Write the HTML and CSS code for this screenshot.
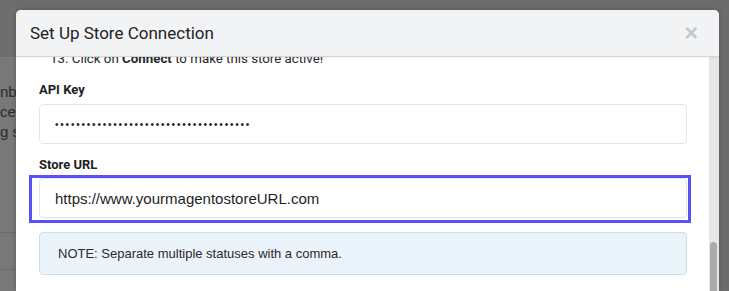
FILE: index.html
```html
<!DOCTYPE html>
<html lang="en">
<head>
  <meta charset="UTF-8" />
  <title>Set Up Store Connection</title>
  <link rel="stylesheet" href="styles.css">
</head>
<body>
  <div class="page-edge">
    <div class="page-head"></div>
    <div class="page-text">
      <p>nb</p>
      <p>ce</p>
      <p>g s</p>
    </div>
    <div class="page-row"></div>
    <div class="page-row"></div>
  </div>

  <div class="modal">
    <div class="modal-header">
      <h1>Set Up Store Connection</h1>
      <span class="close">&times;</span>
    </div>

    <div class="modal-body">
      <div class="content">
        <p class="step">13. Click on <strong>Connect</strong> to make this store active!</p>

        <label>API Key</label>
        <div class="field"><span class="dots">•••••••••••••••••••••••••••••••••••••</span></div>

        <label>Store URL</label>
        <div class="highlight">
          <div class="field url">https://www.yourmagentostoreURL.com</div>
        </div>

        <div class="note">NOTE: Separate multiple statuses with a comma.</div>
      </div>
      <div class="scrollbar"><div class="thumb"></div></div>
    </div>
  </div>
</body>
</html>
```

FILE: styles.css
```css
body {
  margin: 0;
  height: 291px;
  overflow: hidden;
  background: #6c6c6c;
  font-family: 'Liberation Sans', Arial, sans-serif;
  display: flex;
  align-items: flex-start;
}

.page-edge {
  width: 16px;
  height: 291px;
  flex-shrink: 0;
  background: #787878;
}

.page-head {
  height: 57px;
  background: #6e6e6e;
  border-bottom: 1px solid #7e7e7e;
}

.page-text {
  padding-top: 24px;
  color: #2c2c2c;
  font-size: 15px;
}

.page-text p {
  margin: 0;
  line-height: 20px;
  white-space: nowrap;
}

.page-row {
  margin-top: 90px;
  border-top: 1px solid #6a6a6a;
}

.page-row + .page-row {
  margin-top: 36px;
}

/* the dialog lies over the page behind it */
.modal {
  position: relative;
  z-index: 1;
  width: 703px;
  height: 281px;
  margin-top: 10px;
  background: #fff;
  border-radius: 5px 5px 0 0;
  overflow: hidden;
  display: flex;
  flex-direction: column;
  box-shadow: 0 0 4px rgba(0, 0, 0, 0.25);
}

.modal-header {
  height: 46px;
  flex-shrink: 0;
  background: #f2f3f5;
  border-bottom: 1px solid #d3d5d9;
  display: flex;
  align-items: center;
  justify-content: space-between;
  padding: 0 21px 0 14px;
  position: relative;
  z-index: 1;
  box-shadow: 0 1px 2px rgba(0, 0, 0, 0.06);
}

.modal-header h1 {
  margin: 0;
  font-family: Roboto, sans-serif;
  font-size: 17px;
  font-weight: normal;
  color: #1e1e1e;
}

.close {
  font-size: 23px;
  font-weight: bold;
  color: #c3c7cd;
  line-height: 1;
}

.modal-body {
  flex: 1;
  display: flex;
  overflow: hidden;
}

.content {
  flex: 1;
  padding: 0 22px 0 23px;
  color: #222;
}

.step {
  margin: -7px 0 0 11px;
  font-family: Roboto, sans-serif;
  font-size: 13.3px;
  line-height: 18px;
  color: #2a2a2a;
}

label {
  display: block;
  font-family: Roboto, sans-serif;
  font-size: 13px;
  font-weight: bold;
  color: #1e1e1e;
  margin-top: 12px;
  line-height: 20px;
}

.field {
  height: 40px;
  box-sizing: border-box;
  border: 1px solid #e4e4e4;
  border-radius: 4px;
  display: flex;
  align-items: center;
  padding-left: 15px;
  margin-top: 4px;
}

.dots {
  font-size: 10px;
  letter-spacing: 1.8px;
  color: #222;
}

label ~ label {
  margin-top: 11px;
}

.highlight {
  margin: 0 -4px 0 -10px;
  border: 3px solid #5b50f6;
  padding: 0 1px 2px 7px;
}

.highlight .field {
  margin-top: 0;
}

.url {
  font-size: 15px;
  color: #1e1e1e;
}

.note {
  margin-top: 9px;
  height: 43px;
  box-sizing: border-box;
  background: #ebf3fa;
  border: 1px solid #c7e3e9;
  border-radius: 4px;
  padding-left: 18px;
  display: flex;
  align-items: center;
  font-size: 13px;
  color: #2a2a2a;
}

.scrollbar {
  width: 9px;
  background: #e6e6e6;
  display: flex;
  flex-direction: column;
  justify-content: flex-end;
  padding-left: 1px;
}

.thumb {
  width: 7px;
  height: 49px;
  background: #aaaaaa;
  border-radius: 4px 4px 0 0;
}
```
